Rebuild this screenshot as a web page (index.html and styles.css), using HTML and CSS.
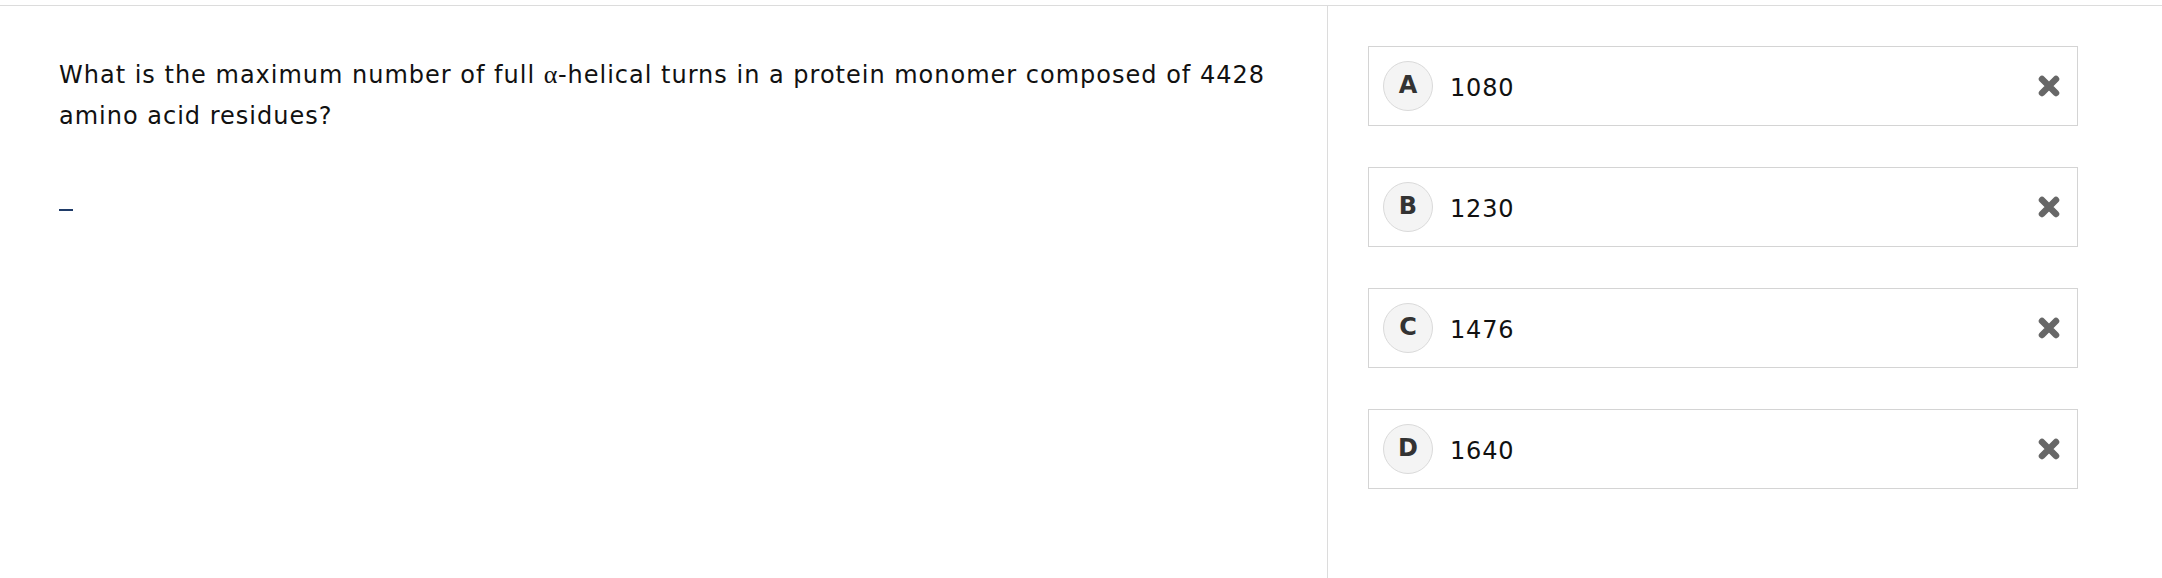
FILE: index.html
```html
<!DOCTYPE html>
<html lang="en">
<head>
<meta charset="utf-8">
<title>Question</title>
<link rel="stylesheet" href="styles.css">
</head>
<body>
<div class="page">
  <section class="question">
    <p class="stem">What is the maximum number of full <span class="greek">α</span>-helical turns in a protein monomer composed of 4428 amino acid residues?</p>
    <div class="cursor"></div>
  </section>
  <section class="options">
    <div class="option">
      <span class="badge">A</span>
      <span class="value">1080</span>
      <svg class="remove" viewBox="0 0 22 22" width="22" height="22"><path d="M4 4L18 18M18 4L4 18"/></svg>
    </div>
    <div class="option">
      <span class="badge">B</span>
      <span class="value">1230</span>
      <svg class="remove" viewBox="0 0 22 22" width="22" height="22"><path d="M4 4L18 18M18 4L4 18"/></svg>
    </div>
    <div class="option">
      <span class="badge">C</span>
      <span class="value">1476</span>
      <svg class="remove" viewBox="0 0 22 22" width="22" height="22"><path d="M4 4L18 18M18 4L4 18"/></svg>
    </div>
    <div class="option">
      <span class="badge">D</span>
      <span class="value">1640</span>
      <svg class="remove" viewBox="0 0 22 22" width="22" height="22"><path d="M4 4L18 18M18 4L4 18"/></svg>
    </div>
  </section>
</div>
</body>
</html>
```
FILE: styles.css
```css
html, body {
  margin: 0;
  padding: 0;
  background: #fff;
}
body {
  font-family: "DejaVu Sans", Verdana, sans-serif;
  color: #111;
}
.page {
  margin-top: 5px;
  border-top: 1px solid #dcdcdc;
  display: flex;
  height: 572px;
}
.question {
  width: 1328px;
  box-sizing: border-box;
  border-right: 1px solid #dcdcdc;
  padding: 49px 56px 0 59px;
}
.stem {
  margin: 0;
  font-size: 24px;
  line-height: 41px;
  letter-spacing: 1px;
  color: #111;
}
.greek {
  font-family: "Liberation Serif", "Times New Roman", serif;
  font-size: 26px;
  line-height: 1;
  letter-spacing: 0.5px;
}
.cursor {
  margin-top: 72px;
  width: 14px;
  height: 2px;
  background: #1f3b68;
}
.options {
  flex: 1;
  padding: 40px 84px 0 40px;
  display: flex;
  flex-direction: column;
  gap: 41px;
}
.option {
  height: 80px;
  box-sizing: border-box;
  border: 1px solid #d4d4d4;
  display: flex;
  align-items: center;
  padding: 0 17px 0 14px;
}
.badge {
  width: 50px;
  height: 50px;
  box-sizing: border-box;
  border: 1px solid #dadada;
  border-radius: 50%;
  background: #f4f4f4;
  display: flex;
  align-items: center;
  justify-content: center;
  font-weight: bold;
  font-size: 24px;
  color: #333;
  padding-bottom: 2px;
}
.value {
  margin-left: 17px;
  padding-top: 3px;
  font-size: 24px;
  letter-spacing: 0.8px;
  color: #111;
  flex: 1;
}
.remove path {
  fill: none;
  stroke: #676767;
  stroke-width: 6.5;
  stroke-linecap: round;
}
```
